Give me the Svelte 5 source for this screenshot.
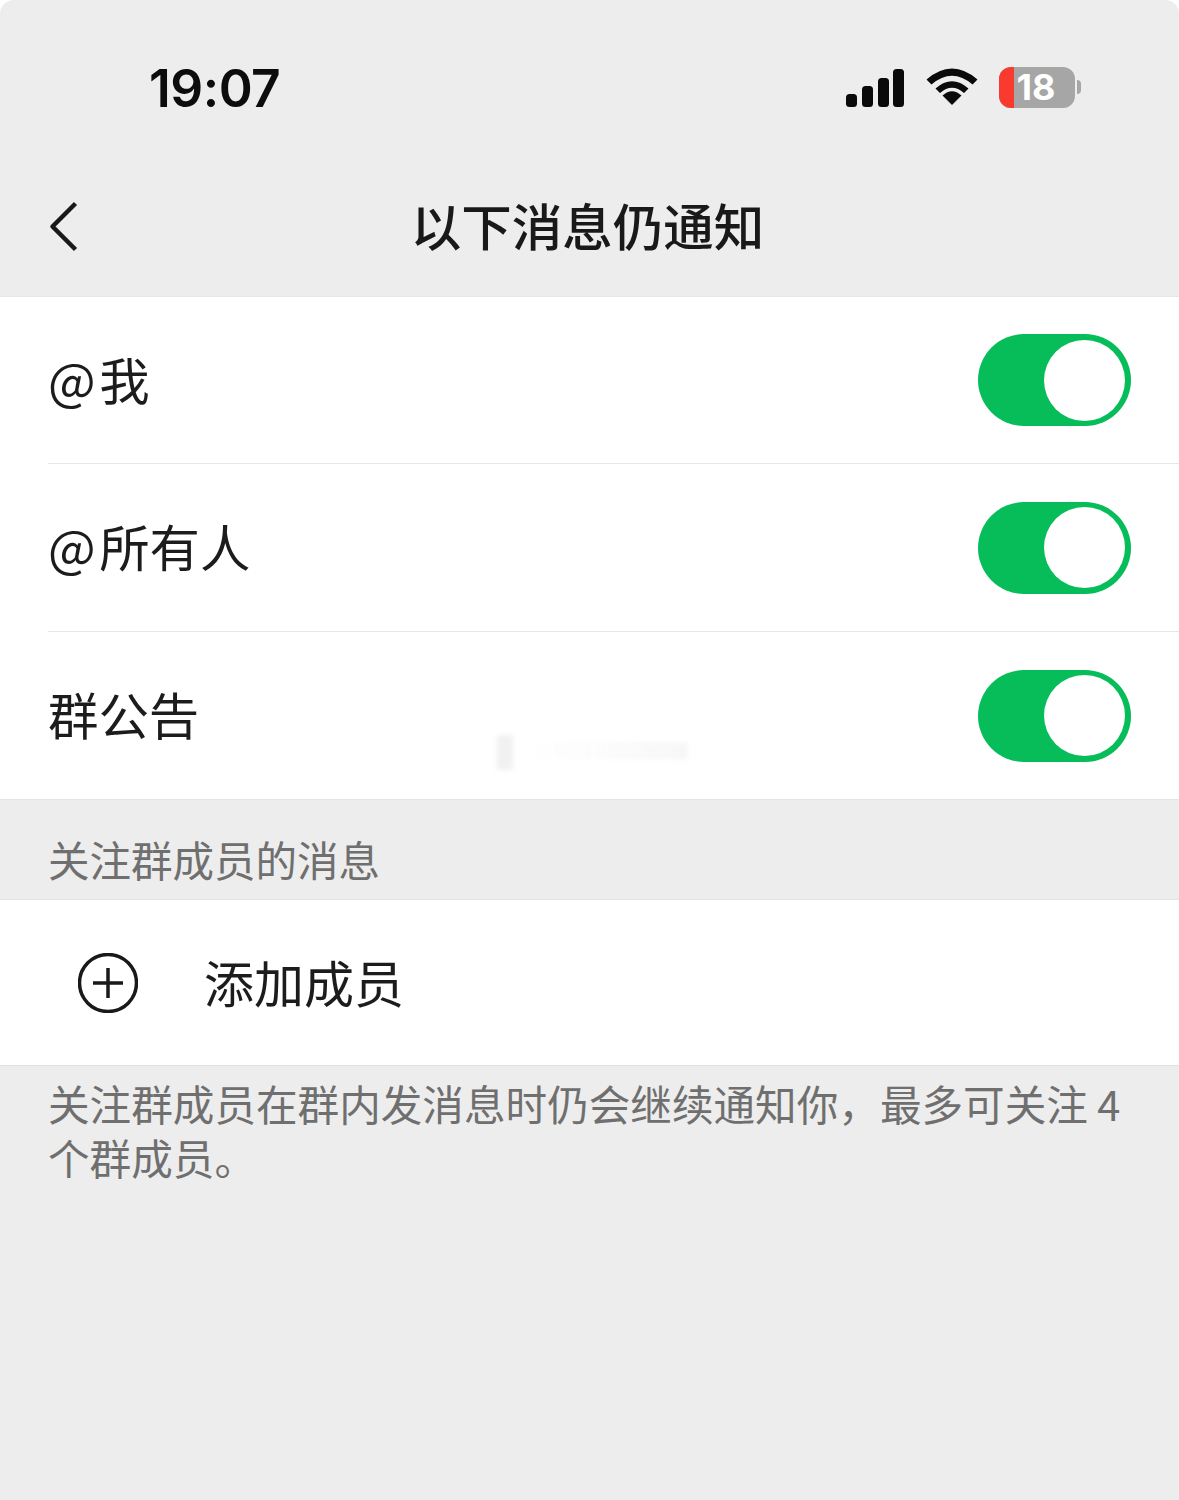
<script>
  let rows = [
    { at: '@', label: '我' },
    { at: '@', label: '所有人' },
    { at: '', label: '群公告' }
  ];
</script>

<div class="page">
  <header class="status">
    <span class="time">19:07</span>
    <div class="status-icons">
      <svg class="signal" width="59" height="38" viewBox="0 0 59 38">
        <rect x="0" y="25" width="11" height="13" rx="3.5" />
        <rect x="16" y="17" width="11" height="21" rx="3.5" />
        <rect x="32" y="9" width="11" height="29" rx="3.5" />
        <rect x="47" y="0" width="11" height="38" rx="3.5" />
      </svg>
      <svg class="wifi" width="52" height="38" viewBox="0 0 52 38">
        <path d="M26 38 L16.5 28.5 Q26 20 35.5 28.5 Z" />
        <path d="M9.5 21.5 Q26 7 42.5 21.5 L38 26 Q26 15.5 14 26 Z" />
        <path d="M0.5 12.5 Q26 -9.500 51.500 12.500 L46.500 17.500 Q26 0 5.500 17.500 Z" />
      </svg>
      <div class="battery">
        <div class="battery-body">
          <span class="battery-red"></span>
          <span class="battery-num">18</span>
        </div>
        <span class="battery-cap"></span>
      </div>
    </div>
  </header>

  <nav class="nav">
    <svg class="back" width="32" height="52" viewBox="0 0 32 52">
      <path d="M26.500 2.500 L3.500 25.500 L26.500 48.500" />
    </svg>
    <h1>以下消息仍通知</h1>
  </nav>

  <section class="list">
    {#each rows as r, i (i)}
      <div class="row">
        <span class="row-label"><span class="at">{r.at}</span>{r.label}</span>
        <div class="switch"><span class="knob"></span></div>
        {#if i === 2}
          <div class="smudge"></div>
        {/if}
      </div>
    {/each}
  </section>

  <div class="section-title">关注群成员的消息</div>

  <section class="add">
    <svg class="plus" width="60" height="60" viewBox="0 0 60 60">
      <circle cx="30" cy="30" r="28.500" />
      <path d="M30 15 V45 M15 30 H45" />
    </svg>
    <span class="add-label">添加成员</span>
  </section>

  <p class="note">关注群成员在群内发消息时仍会继续通知你，最多可关注 4 个群成员。</p>
</div>

<style>
  :global(body) {
    margin: 0;
    background: #fff;
  }
  .page {
    box-sizing: border-box;
    width: 1179px;
    height: 1500px;
    overflow: hidden;
    background: #ededed;
    border-radius: 14px 14px 0 0;
    color: #191919;
    font-family: "Noto Sans CJK SC", "Noto Sans", sans-serif;
  }
  .status {
    box-sizing: border-box;
    height: 160px;
    display: flex;
    justify-content: space-between;
    align-items: flex-start;
    padding: 56px 98px 0 149px;
  }
  .time {
    margin-top: 1px;
    font-family: Inter, "Liberation Sans", sans-serif;
    font-size: 51.500px;
    line-height: 63px;
    font-weight: 600;
    color: #0c0c0c;
    letter-spacing: -0.5px;
  }
  .status-icons {
    display: flex;
    align-items: center;
    gap: 21px;
    height: 62px;
  }
  .signal, .wifi {
    fill: #0a0a0a;
  }
  .signal {
    margin-top: 1px;
  }
  .wifi {
    margin-top: -3px;
  }
  .battery {
    display: flex;
    align-items: center;
    gap: 2px;
  }
  .battery-body {
    position: relative;
    width: 76px;
    height: 41px;
    border-radius: 12px;
    background: #a6a6a6;
    display: flex;
    align-items: center;
    justify-content: center;
  }
  .battery-red {
    position: absolute;
    left: 0;
    top: 0;
    bottom: 0;
    width: 15px;
    border-radius: 12px 0 0 12px;
    background: #f93a2f;
  }
  .battery-num {
    position: relative;
    margin-left: -2px;
    font-family: Inter, "Liberation Sans", sans-serif;
    font-size: 36px;
    line-height: 41px;
    font-weight: 700;
    color: #fff;
  }
  .battery-cap {
    width: 4px;
    height: 14px;
    background: #a6a6a6;
    border-radius: 0 4px 4px 0;
  }
  .nav {
    position: relative;
    height: 137px;
    box-sizing: border-box;
    border-bottom: 1px solid #e6e6e6;
    display: flex;
    align-items: center;
    justify-content: center;
  }
  .back {
    position: absolute;
    left: 49px;
    top: 41px;
    fill: none;
    stroke: #191919;
    stroke-width: 4.500;
    stroke-linejoin: round;
  }
  h1 {
    margin: -8px 0 0 -4px;
    font-size: 50.500px;
    line-height: 70px;
    font-weight: 500;
    color: #191919;
  }
  .list {
    background: #fff;
    border-bottom: 1px solid #e4e4e4;
    padding-left: 48px;
  }
  .row {
    position: relative;
    box-sizing: border-box;
    height: 168px;
    display: flex;
    align-items: center;
    justify-content: space-between;
    padding-right: 48px;
    border-bottom: 1px solid #e6e6e6;
  }
  .row:first-child, .row:last-child {
    height: 167px;
  }
  .row:last-child {
    border-bottom: 0;
  }
  .row-label {
    font-size: 50.400px;
    line-height: 70px;
    margin-top: -3px;
    color: #1c1c1c;
  }
  .at {
    letter-spacing: 3.500px;
  }
  .switch {
    box-sizing: border-box;
    width: 153px;
    height: 92px;
    border-radius: 46px;
    background: #07bd5a;
    padding: 5.500px 6px;
    display: flex;
    justify-content: flex-end;
  }
  .knob {
    width: 81px;
    height: 81px;
    border-radius: 50%;
    background: #fff;
  }
  /* faint ghosting left in the screenshot, over the last row */
  .smudge {
    position: absolute;
    left: 449px;
    top: 103px;
    width: 16px;
    height: 35px;
    background: #f1f1f1;
    filter: blur(2px);
  }
  .smudge::after {
    content: "";
    position: absolute;
    left: 24px;
    top: 8px;
    width: 167px;
    height: 18px;
    background: repeating-linear-gradient(180deg, #e9e9e9 0 2px, #fbfbfb 2px 6px);
    opacity: 0.8;
    -webkit-mask-image: linear-gradient(90deg, transparent, rgb(0 0 0 / 0.4) 50%, #000);
    mask-image: linear-gradient(90deg, transparent, rgb(0 0 0 / 0.4) 50%, #000);
  }
  .section-title {
    box-sizing: border-box;
    height: 99px;
    padding: 30px 0 0 48px;
    font-size: 41.500px;
    line-height: 58px;
    color: #6f6f6f;
    white-space: nowrap;
  }
  .add {
    box-sizing: border-box;
    height: 167px;
    background: #fff;
    border-top: 1px solid #e4e4e4;
    border-bottom: 1px solid #e0e0e0;
    display: flex;
    align-items: center;
    padding-left: 78px;
    gap: 66px;
  }
  .plus {
    fill: none;
    stroke: #191919;
    stroke-width: 3.500;
  }
  .add-label {
    font-size: 50px;
    line-height: 70px;
    margin-top: -4px;
    color: #1c1c1c;
  }
  .note {
    margin: 10px 48px 0 48px;
    font-size: 41.600px;
    line-height: 54px;
    color: #6f6f6f;
  }
</style>
